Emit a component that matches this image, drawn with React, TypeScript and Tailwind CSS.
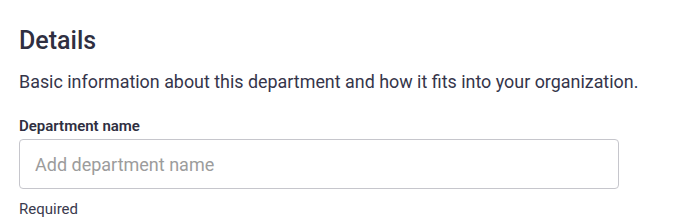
export default function App() {
  return (
    <div className="min-h-screen bg-white px-[19px] pt-[25px] font-['Roboto',sans-serif]">
      <h2 className="text-[25px] font-medium leading-[32px] text-[#2f2f41]">Details</h2>
      <p className="mt-[12px] text-[17.9px] leading-[26px] text-[#35354a]">
        Basic information about this department and how it fits into your organization.
      </p>
      <label className="mt-[21px] block text-[15px] font-semibold leading-[20px] text-[#2f2f41]">
        Department name
      </label>
      <input
        type="text"
        placeholder="Add department name"
        className="mt-[3px] block h-[50px] w-[600px] rounded-[4px] border border-[#c6c6cc] px-[15px] text-[18px] text-[#2f2f41] outline-none placeholder:text-[#9c9c9c]"
      />
      <p className="mt-[10px] text-[15px] leading-[20px] text-[#3a3a4e]">Required</p>
    </div>
  );
}
